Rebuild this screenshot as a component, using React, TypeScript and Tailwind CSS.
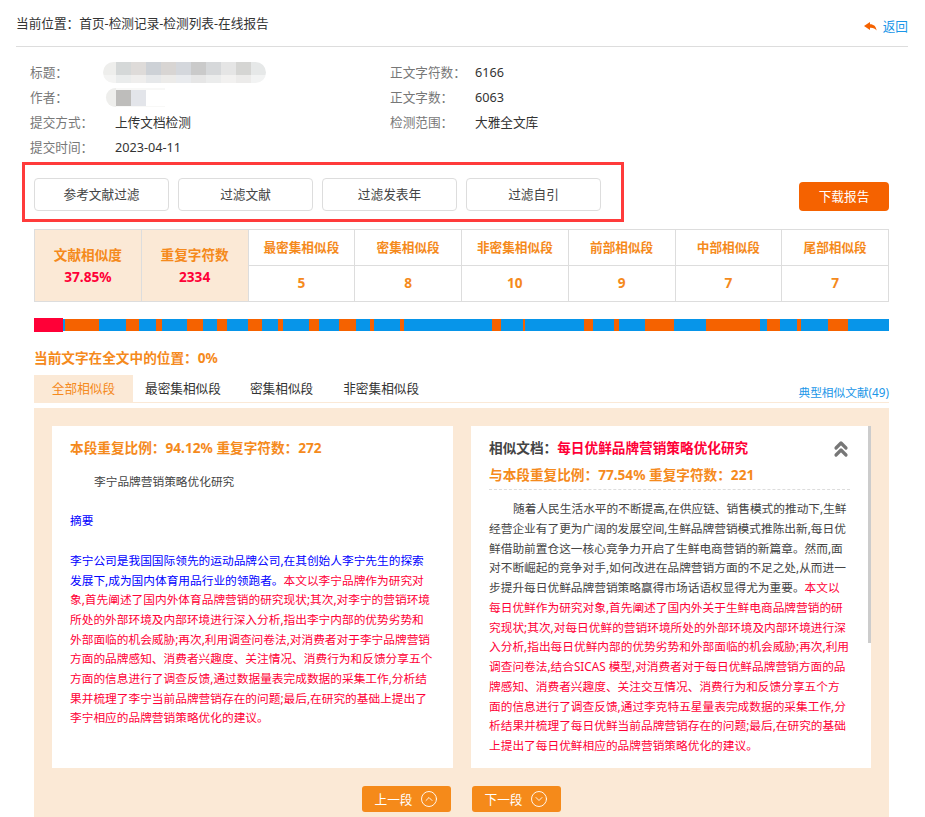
import { ChevronsUp, CircleChevronDown, CircleChevronUp } from "lucide-react";

// 相似片段分布条：交替的蓝/橙段，数值为各段终点
const barStops = [
  65, 99, 126, 139, 156, 162, 187, 203, 217, 227, 248, 262, 278, 283, 309, 319, 339, 356, 370, 374, 400, 404,
  492, 501, 523, 525, 584, 593, 614, 619, 645, 674, 706, 735.6, 736, 760, 767, 780, 797, 801, 828, 848, 889,
];

const stats = [
  { title: "最密集相似段", value: 5 },
  { title: "密集相似段", value: 8 },
  { title: "非密集相似段", value: 10 },
  { title: "前部相似段", value: 9 },
  { title: "中部相似段", value: 7 },
  { title: "尾部相似段", value: 7 },
];

const titleMosaic = [
  ["w-[13px]", "bg-[#eeeeec]", "bg-[#f4f4f3]"],
  ["w-[15px]", "bg-[#d5d8d8]", "bg-[#eaecec]"],
  ["w-[15px]", "bg-[#dedbd9]", "bg-[#efeeed]"],
  ["w-[15px]", "bg-[#cdd1d6]", "bg-[#e6e8ea]"],
  ["w-[15px]", "bg-[#d8d5d3]", "bg-[#ecebe9]"],
  ["w-[15px]", "bg-[#d4d7dc]", "bg-[#e9ebee]"],
  ["w-[15px]", "bg-[#cacaca]", "bg-[#e6e6e6]"],
  ["w-[15px]", "bg-[#d6d8da]", "bg-[#ebecec]"],
  ["w-[15px]", "bg-[#e5e5e5]", "bg-[#f2f1f0]"],
  ["w-[15px]", "bg-[#d5d5d3]", "bg-[#ecebea]"],
  ["w-[15px]", "bg-[#e6e8e8]", "bg-[#f2f3f3]"],
];

function InfoRow({ label, children, label2, value2 }: { label: string; children: React.ReactNode; label2?: string; value2?: string }) {
  return (
    <div className="grid h-[25px] grid-cols-[85px_275px_85px_1fr] items-center">
      <span className="text-[#777]">{label}</span>
      <span className="text-[#333]">{children}</span>
      <span className="text-[#777]">{label2}</span>
      <span className="text-[#333]">{value2}</span>
    </div>
  );
}

function FilterButton({ text }: { text: string }) {
  return (
    <button className="h-[33px] w-[135px] rounded-sm border border-[#ddd] bg-white text-[#444]">{text}</button>
  );
}

export default function App() {
  return (
    <div
      className="h-screen overflow-hidden bg-white text-[12.67px] text-[#333]"
      style={{ fontFamily: '"Noto Sans", "Noto Sans CJK SC", sans-serif' }}
    >
      {/* 顶部位置栏 */}
      <div className="ml-4 mr-[17px] flex h-[47px] justify-between border-b border-[#ddd] pt-[15px]">
        <span className="leading-[17px]">当前位置：首页-检测记录-检测列表-在线报告</span>
        <a className="mt-[3px] flex h-[17px] items-center gap-[6px] text-[#1a96e8]">
          <svg width="13" height="9" viewBox="0 0 13 9" fill="#f56200">
            <path d="M0 4 L6 0 L6 2.2 C9.8 2.2 12.2 4.4 12.6 8.6 C11 6.4 9 5.6 6 5.8 L6 8 Z" />
          </svg>
          返回
        </a>
      </div>

      {/* 文档信息 */}
      <div className="ml-[30px] mt-[13px]">
        <InfoRow label="标题：" label2="正文字符数：" value2="6166">
          <div className="-ml-[12px] flex h-[21px] w-[163px] flex-col overflow-hidden rounded-full">
            <div className="flex h-[13px]">
              {titleMosaic.map(([w, top], i) => (
                <div key={i} className={`${w} ${top}`} />
              ))}
            </div>
            <div className="flex h-2">
              {titleMosaic.map(([w, , bottom], i) => (
                <div key={i} className={`${w} ${bottom}`} />
              ))}
            </div>
          </div>
        </InfoRow>
        <InfoRow label="作者：" label2="正文字数：" value2="6063">
          <div className="-ml-[9px] flex h-[19px] w-[59px] items-center overflow-hidden rounded-l-full bg-[#f8f8f7]">
            <div className="h-full w-[10px] bg-[#eeeeec]" />
            <div className="h-4 w-[15px] bg-[#bebdbb]" />
            <div className="h-4 w-[15px] bg-[#e3e5ea]" />
            <div className="h-4 flex-1 bg-white" />
          </div>
        </InfoRow>
        <InfoRow label="提交方式：" label2="检测范围：" value2="大雅全文库">
          上传文档检测
        </InfoRow>
        <InfoRow label="提交时间：">2023-04-11</InfoRow>
      </div>

      {/* 过滤按钮 */}
      <div className="ml-[22px] mr-[36px] mt-[2px] flex items-start justify-between">
        <div className="flex h-[60px] w-[602px] items-start gap-[9px] border-[3px] border-[#ff3b3b] pl-[9px] pt-[13px]">
          <FilterButton text="参考文献过滤" />
          <FilterButton text="过滤文献" />
          <FilterButton text="过滤发表年" />
          <FilterButton text="过滤自引" />
        </div>
        <button className="mt-5 h-[29px] w-[90px] rounded-sm bg-[#f56200] text-white">下载报告</button>
      </div>

      <div className="ml-[34px] mr-[36px] mt-[7px]">
        {/* 统计表 */}
        <table className="w-full table-fixed border-collapse text-center font-bold text-[#f58a1c]">
          <tbody>
            <tr className="h-[36px]">
              <td rowSpan={2} className="border border-[#ddd] bg-[#fbe9d6] text-[13.65px] leading-[22px]">
                文献相似度
                <div className="text-[#ff0037]">37.85%</div>
              </td>
              <td rowSpan={2} className="border border-[#ddd] bg-[#fbe9d6] text-[13.65px] leading-[22px]">
                重复字符数
                <div className="text-[#ff0037]">2334</div>
              </td>
              {stats.map((s) => (
                <td key={s.title} className="border border-[#ddd]">
                  {s.title}
                </td>
              ))}
            </tr>
            <tr className="h-[36px]">
              {stats.map((s) => (
                <td key={s.title} className="border border-[#ddd] text-[13.65px]">
                  {s.value}
                </td>
              ))}
            </tr>
          </tbody>
        </table>

        {/* 分布条 */}
        <div className="relative mt-[17px] flex h-3">
          {barStops.map((stop, i) => (
            <div
              key={i}
              className={i % 2 === 0 ? "bg-[#0795e9]" : "bg-[#f56200]"}
              style={{ width: stop - (i === 0 ? 34 : barStops[i - 1]) }}
            />
          ))}
          <div className="absolute -top-px left-0 h-[14px] w-[29px] bg-[#ff0037]" />
        </div>

        <div className="mt-[18px] text-[13.65px] font-bold leading-[18px] text-[#f58a1c]">当前文字在全文中的位置：0%</div>

        {/* 标签页 */}
        <div className="mt-[8px] flex h-[28px] items-start justify-between border-b border-[#fbe9d6]">
          <div className="flex h-[27px] items-center">
            <span className="flex h-full w-[99px] items-center justify-center bg-[#fbe9d6] text-[#f58a1c]">全部相似段</span>
            <span className="ml-3">最密集相似段</span>
            <span className="ml-[29px]">密集相似段</span>
            <span className="ml-[30px]">非密集相似段</span>
          </div>
          <a className="mt-[8px] text-[11.7px] leading-[18px] text-[#1a96e8]">典型相似文献(49)</a>
        </div>

        {/* 段落对比 */}
        <div className="mt-[5px] h-[430px] bg-[#fbe9d6] px-[18px] pt-[18px]">
          <div className="flex gap-[18px]">
            <div className="h-[342px] w-[401px] whitespace-nowrap bg-white px-[18px] pt-[13px]">
              <div className="text-[13.65px] font-bold leading-[18px] text-[#f58a1c]">本段重复比例：94.12% 重复字符数：272</div>
              <div className="mt-[15px] text-[11.7px] leading-[19.7px] text-[#444]">
                <div className="pl-6">李宁品牌营销策略优化研究</div>
                <br />
                <div className="text-[#0000ff]">摘要</div>
                <br />
                <div className="text-[#ff0037]">
                  <span className="text-[#0000ff]">
                    李宁公司是我国国际领先的运动品牌公司,在其创始人李宁先生的探索
                    <br />
                    发展下,成为国内体育用品行业的领跑者。
                  </span>
                  本文以李宁品牌作为研究对
                  <br />
                  象,首先阐述了国内外体育品牌营销的研究现状;其次,对李宁的营销环境
                  <br />
                  所处的外部环境及内部环境进行深入分析,指出李宁内部的优势劣势和
                  <br />
                  外部面临的机会威胁;再次,利用调查问卷法,对消费者对于李宁品牌营销
                  <br />
                  方面的品牌感知、消费者兴趣度、关注情况、消费行为和反馈分享五个
                  <br />
                  方面的信息进行了调查反馈,通过数据量表完成数据的采集工作,分析结
                  <br />
                  果并梳理了李宁当前品牌营销存在的问题;最后,在研究的基础上提出了
                  <br />
                  李宁相应的品牌营销策略优化的建议。
                </div>
              </div>
            </div>

            <div className="relative h-[342px] w-[400px] whitespace-nowrap bg-white pl-[18px] pr-[21px] pt-[13px]">
              <div className="text-[13.65px] font-bold leading-[18px] text-[#444]">
                相似文档：<span className="text-[#ff0037]">每日优鲜品牌营销策略优化研究</span>
              </div>
              <div className="mt-[9px] border-b border-dashed border-[#ddd] pb-[5px] text-[13.65px] font-bold leading-[18px] text-[#f58a1c]">
                与本段重复比例：77.54% 重复字符数：221
              </div>
              <ChevronsUp className="absolute right-[18px] top-[11px] h-6 w-6 text-[#777]" strokeWidth={3.2} />
              <div className="mt-[9px] text-[11.7px] leading-[19.75px] text-[#444]">
                <span className="pl-6">随着人民生活水平的不断提高,在供应链、销售模式的推动下,生鲜</span>
                <br />
                经营企业有了更为广阔的发展空间,生鲜品牌营销模式推陈出新,每日优
                <br />
                鲜借助前置仓这一核心竞争力开启了生鲜电商营销的新篇章。然而,面
                <br />
                对不断崛起的竞争对手,如何改进在品牌营销方面的不足之处,从而进一
                <br />
                步提升每日优鲜品牌营销策略赢得市场话语权显得尤为重要。
                <span className="text-[#ff0037]">
                  本文以
                  <br />
                  每日优鲜作为研究对象,首先阐述了国内外关于生鲜电商品牌营销的研
                  <br />
                  究现状;其次,对每日优鲜的营销环境所处的外部环境及内部环境进行深
                  <br />
                  入分析,指出每日优鲜内部的优势劣势和外部面临的机会威胁;再次,利用
                  <br />
                  调查问卷法,结合SICAS 模型,对消费者对于每日优鲜品牌营销方面的品
                  <br />
                  牌感知、消费者兴趣度、关注交互情况、消费行为和反馈分享五个方
                  <br />
                  面的信息进行了调查反馈,通过李克特五星量表完成数据的采集工作,分
                  <br />
                  析结果并梳理了每日优鲜当前品牌营销存在的问题;最后,在研究的基础
                  <br />
                  上提出了每日优鲜相应的品牌营销策略优化的建议。
                </span>
              </div>
              <div className="absolute right-0 top-0 h-[217px] w-[3px] bg-[#ccc]" />
            </div>
          </div>

          <div className="mt-[18px] flex justify-center gap-[21px]">
            <button className="flex h-[26px] w-[89px] items-center justify-center gap-[8px] rounded-[3px] bg-[#f58a1a] text-white">
              上一段
              <CircleChevronUp size={18} strokeWidth={1.2} />
            </button>
            <button className="flex h-[26px] w-[89px] items-center justify-center gap-[8px] rounded-[3px] bg-[#f58a1a] text-white">
              下一段
              <CircleChevronDown size={18} strokeWidth={1.2} />
            </button>
          </div>
        </div>
      </div>
    </div>
  );
}
